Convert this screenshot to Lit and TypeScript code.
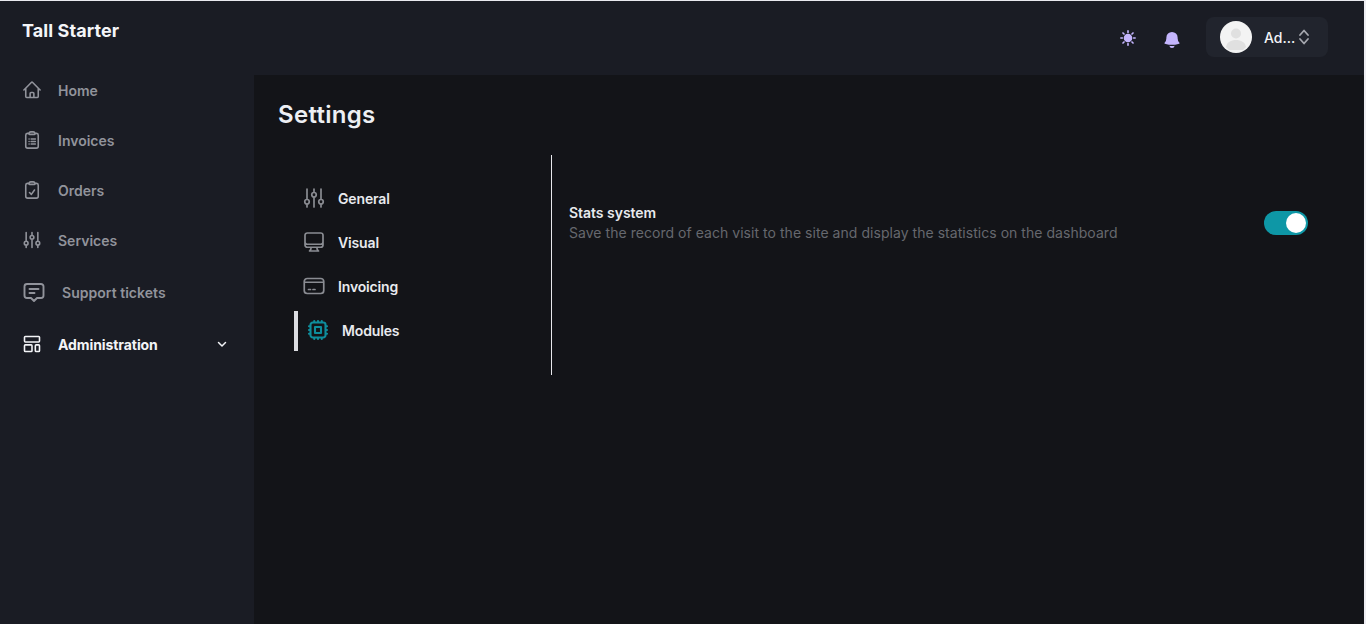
import { LitElement, html, css, svg } from "lit";
import { customElement } from "lit/decorators.js";

const ic = (d: string, cls = "ic") => html`<svg class=${cls} viewBox="0 0 24 24" fill="none" stroke="currentColor" stroke-width="1.9" stroke-linecap="round" stroke-linejoin="round">${svg`<path d=${d}></path>`}</svg>`;

const HOME = "M2.25 12l8.954-8.955a1.126 1.126 0 011.591 0L21.75 12M4.5 9.75v10.125c0 .621.504 1.125 1.125 1.125H9.75v-4.875c0-.621.504-1.125 1.125-1.125h2.25c.621 0 1.125.504 1.125 1.125V21h4.125c.621 0 1.125-.504 1.125-1.125V9.75M8.25 21h8.25";
const CLIP_BASE = "M15.666 3.888A2.25 2.25 0 0013.5 2.25h-3a2.25 2.25 0 00-2.166 1.638m7.332 0c.055.194.084.4.084.612v0a.75.75 0 01-.75.75H9a.75.75 0 01-.75-.75v0c0-.212.03-.418.084-.612m7.332 0c.646.049 1.288.11 1.927.184 1.1.128 1.907 1.077 1.907 2.185V19.5a2.25 2.25 0 01-2.25 2.25H6.75A2.25 2.25 0 014.5 19.5V6.257c0-1.108.806-2.057 1.907-2.185a48.208 48.208 0 011.927-.184";
const INVOICE = CLIP_BASE + "M8.5 10.75h.01M11 10.75h5M8.5 13.75h.01M11 13.75h5M8.5 16.75h.01M11 16.75h5";
const ORDER = CLIP_BASE + "M9 15l2.25 2.25L15 12";
const SLIDERS = "M5 3v10.5M5 18v3M12 3v3.5M12 11v10M19 3v10.5M19 18v3M7.25 15.75a2.25 2.25 0 11-4.5 0 2.25 2.25 0 014.5 0zM14.25 8.75a2.25 2.25 0 11-4.5 0 2.25 2.25 0 014.5 0zM21.25 15.75a2.25 2.25 0 11-4.5 0 2.25 2.25 0 014.5 0z";
const CHAT = "M5 4h14a2.5 2.5 0 012.5 2.5v9a2.5 2.5 0 01-2.5 2.5h-4l-3 3-3-3H5a2.5 2.5 0 01-2.5-2.5v-9A2.5 2.5 0 015 4zM7.5 9h9M7.5 13h5";
const LAYOUT = "M4 3h16a1 1 0 011 1v4.5a1 1 0 01-1 1H4a1 1 0 01-1-1V4a1 1 0 011-1zM4 13h7a1 1 0 011 1v6a1 1 0 01-1 1H4a1 1 0 01-1-1v-6a1 1 0 011-1zM17 13h3a1 1 0 011 1v6a1 1 0 01-1 1h-3a1 1 0 01-1-1v-6a1 1 0 011-1z";
const MONITOR = "M9 17.25v1.007a3 3 0 01-.879 2.122L7.5 21h9l-.621-.621A3 3 0 0115 18.257V17.25m6-12V15a2.25 2.25 0 01-2.25 2.25H5.25A2.25 2.25 0 013 15V5.25m18 0A2.25 2.25 0 0018.75 3H5.25A2.25 2.25 0 003 5.25m18 0V12a2.25 2.25 0 01-2.25 2.25H5.25A2.25 2.25 0 013 12V5.25";
const CARD = "M2.25 8.25h19.5M5.25 19.5h13.5a3 3 0 003-3v-9a3 3 0 00-3-3H5.25a3 3 0 00-3 3v9a3 3 0 003 3zM6.5 15.5h2M11 15.5h2";
const CHIP = "M8.25 3v1.5M4.5 8.25H3m18 0h-1.5M4.5 12H3m18 0h-1.5m-15 3.75H3m18 0h-1.5M8.25 19.5V21M12 3v1.5m0 15V21m3.75-18v1.5m0 15V21m-9-1.5h10.5a2.25 2.25 0 002.25-2.25V6.75a2.25 2.25 0 00-2.25-2.25H6.75A2.25 2.25 0 004.5 6.75v10.5a2.25 2.25 0 002.25 2.25zm2.25-10.5h6v6h-6v-6z";

@customElement("app-root")
export class AppRoot extends LitElement {
  static styles = css`
    :host { display: block; height: 624px; overflow: hidden; font-family: Inter, "Noto Sans", sans-serif; background: #131418; }
    .page { height: 624px; display: grid; grid-template-columns: 254px 1fr 2px; grid-template-rows: 1px 74px 1fr; }
    .topline { grid-column: 1 / 4; background: #e9e9ef; }
    .edge { grid-column: 3; grid-row: 2 / 4; background: #eeeef3; }
    .brand { grid-column: 1; grid-row: 2; background: #1a1c24; padding: 18px 0 0 22px; font-size: 18px; line-height: 24px; font-weight: 700; color: #f4f5f8; letter-spacing: 0.08px; }
    .top { grid-column: 2; grid-row: 2; background: #1a1c24; display: flex; align-items: center; justify-content: flex-end; padding: 0 36px 2px 0; }
    .side { grid-column: 1; grid-row: 3; background: #1a1c24; padding: 0 0 0 22px; }
    .navs { margin-top: -10px; }
    .main { grid-column: 2; grid-row: 3; padding: 24px 0 0 24px; }
    .nav { display: flex; align-items: center; height: 50px; color: #91939b; font-size: 14px; font-weight: 600; }
    .nav .ic { width: 20px; height: 20px; margin-right: 16px; flex: none; }
    .nav.support { height: 54px; }
    .nav.support .ic { width: 24px; height: 24px; margin-right: 16px; }
    .nav.support span { letter-spacing: 0.03px; }
    .nav.active { height: 50px; color: #f3f4f7; font-weight: 700; letter-spacing: -0.08px; }
    .nav .chev { width: 12px; height: 12px; margin: 0 26px 0 auto; stroke-width: 3; }
    .sun { width: 18px; height: 18px; color: #c4b5fd; margin-top: 2px; }
    .bell { width: 20px; height: 20px; fill: #c4b5fd; margin-left: 25px; margin-top: 6px; }
    .user { margin-left: 24px; width: 122px; height: 40px; background: #21242d; border-radius: 8px; display: flex; align-items: center; padding-left: 14px; box-sizing: border-box; color: #f3f4f7; font-size: 14px; font-weight: 500; }
    .avatar { width: 32px; height: 32px; flex: none; border-radius: 50%; background: #f3f3f3; overflow: hidden; margin-right: 12px; }
    .updown { width: 16px; height: 16px; color: #a5a7ae; margin-left: 1px; }
    h1 { margin: 0; font-size: 24px; line-height: 32px; font-weight: 600; color: #edeff3; letter-spacing: 0.3px; }
    .panel { display: grid; grid-template-columns: 274px 1fr; margin: 24px 0 0 0; width: 1044px; height: 220px; }
    .tabs { padding-top: 21px; border-right: 1px solid #e8e8ec; padding-left: 16px; }
    .tab { display: flex; align-items: center; height: 44px; padding-left: 8px; font-size: 14px; font-weight: 600; color: #e8eaee; letter-spacing: -0.15px; }
    .tab .ic { width: 24px; height: 24px; color: #8a8c92; margin-right: 12px; flex: none; stroke-width: 1.7; }
    .tab.on { height: 40px; margin-top: 3px; border-left: 4px solid #dcdde1; padding: 0 0 2px 8px; box-sizing: border-box; }
    .tab.on .ic { color: #0e8d9c; stroke-width: 2.1; }
    .row { display: flex; align-items: flex-start; justify-content: space-between; padding: 48px 12px 0 17px; margin-right: 2px; }
    .t { font-size: 14px; line-height: 20px; font-weight: 600; color: #e8eaee; letter-spacing: -0.03px; }
    .d { font-size: 14px; line-height: 20px; color: #66686e; letter-spacing: 0.04px; }
    .sw { margin-top: 8px; width: 44px; height: 24px; border-radius: 12px; background: #0e97a6; display: flex; justify-content: flex-end; align-items: center; padding: 2px; box-sizing: border-box; }
    .knob { width: 20px; height: 20px; border-radius: 50%; background: #fff; }
  `;

  render() {
    return html`<div class="page">
      <div class="topline"></div>
      <div class="brand">Tall Starter</div>
      <header class="top">
        <svg class="sun" viewBox="0 0 24 24" fill="#c4b5fd" stroke="currentColor" stroke-width="2.2" stroke-linecap="round"><circle cx="12" cy="12" r="4.6"></circle><path d="M12 2.5v2M12 19.5v2M2.5 12h2M19.5 12h2M5.3 5.3l1.4 1.4M17.3 17.3l1.4 1.4M5.3 18.7l1.4-1.4M17.3 6.7l1.4-1.4"></path></svg>
        <svg class="bell" viewBox="0 0 24 24"><path d="M12 2.25A6.75 6.75 0 005.25 9v.75a8.2 8.2 0 01-2.12 5.52.75.75 0 00.3 1.22c1.5.55 3.1.95 4.75 1.17h7.64a20.9 20.9 0 004.75-1.17.75.75 0 00.3-1.22 8.2 8.2 0 01-2.12-5.52V9A6.75 6.75 0 0012 2.25z"></path><path d="M8.8 18.9a3.25 3.25 0 006.4 0 24 24 0 01-6.4 0z"></path></svg>
        <div class="user">
          <svg class="avatar" viewBox="0 0 32 32"><circle cx="16" cy="12.5" r="5" fill="#e0e0e0"></circle><path d="M6 26c1-5 5-7 10-7s9 2 10 7l-3 3H9z" fill="#e0e0e0"></path></svg>
          <span>Ad...</span>
          <svg class="updown" viewBox="0 0 16 16" fill="none" stroke="currentColor" stroke-width="1.8" stroke-linecap="round" stroke-linejoin="round"><path d="M4 6l4-4.5L12 6M4 10l4 4.5L12 10"></path></svg>
        </div>
      </header>
      <aside class="side"><div class="navs">
        <div class="nav">${ic(HOME)}<span>Home</span></div>
        <div class="nav">${ic(INVOICE)}<span>Invoices</span></div>
        <div class="nav">${ic(ORDER)}<span>Orders</span></div>
        <div class="nav">${ic(SLIDERS)}<span>Services</span></div>
        <div class="nav support">${ic(CHAT)}<span>Support tickets</span></div>
        <div class="nav active">${ic(LAYOUT)}<span>Administration</span>${ic("M5 9l7 7 7-7", "ic chev")}</div>
      </div></aside>
      <main class="main">
        <h1>Settings</h1>
        <div class="panel">
          <div class="tabs">
            <div class="tab">${ic(SLIDERS)}<span>General</span></div>
            <div class="tab">${ic(MONITOR)}<span>Visual</span></div>
            <div class="tab">${ic(CARD)}<span>Invoicing</span></div>
            <div class="tab on">${ic(CHIP)}<span>Modules</span></div>
          </div>
          <div class="row">
            <div><div class="t">Stats system</div><div class="d">Save the record of each visit to the site and display the statistics on the dashboard</div></div>
            <div class="sw"><div class="knob"></div></div>
          </div>
        </div>
      </main>
      <div class="edge"></div>
    </div>`;
  }
}
